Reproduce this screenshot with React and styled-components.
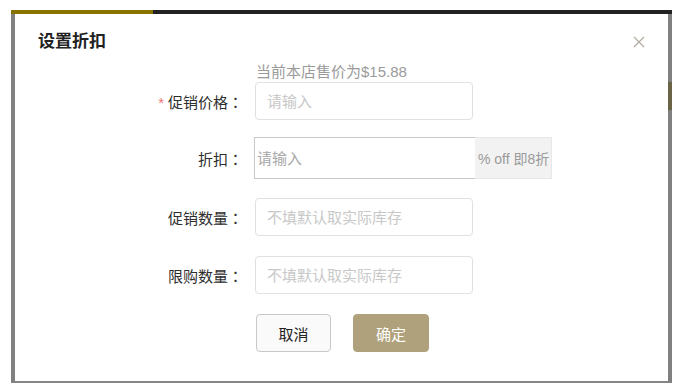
import React from "react";
import styled, { createGlobalStyle } from "styled-components";

const Global = createGlobalStyle`
  html, body { margin: 0; padding: 0; background: #fff; }
  body { font-family: "Liberation Sans", "Noto Sans CJK SC", sans-serif; }
  * { box-sizing: border-box; }
`;

const Page = styled.div`
  width: 693px;
  height: 390px;
  padding: 10px 21px 7px 11px;
  background: #fff;
`;

const Frame = styled.div`
  display: flex;
  flex-direction: column;
  height: 373px;
  border-left: 4px solid #808080;
  border-right: 4px solid #808080;
  border-bottom: 2px solid #858585;
  background: #fff;
  position: relative;
`;

const TopBar = styled.div`
  display: flex;
  height: 4px;
  margin: 0 -4px;
`;

const BarSegment = styled.div`
  height: 100%;
  flex: ${(p) => (p.$grow ? "1" : "0 0 142px")};
  background: ${(p) => p.$color};
`;

const SideMark = styled.div`
  position: absolute;
  right: -4px;
  top: 72px;
  width: 4px;
  height: 28px;
  background: #6b6348;
`;

const Modal = styled.div`
  flex: 1;
  display: flex;
  flex-direction: column;
`;

const Header = styled.div`
  display: flex;
  align-items: center;
  justify-content: space-between;
  padding: 16px 23px 0 23px;
  height: 40px;
`;

const Title = styled.h2`
  margin: 0;
  font-size: 17px;
  line-height: 24px;
  font-weight: 700;
  color: #222;
`;

const Close = styled.button`
  border: 0;
  background: none;
  padding: 0;
  width: 12px;
  height: 12px;
  display: flex;
  cursor: pointer;
`;

const Form = styled.div`
  display: grid;
  grid-template-columns: 228px 1fr;
  column-gap: 12px;
  margin-top: 8px;
  align-items: center;
`;

const Hint = styled.div`
  grid-column: 2;
  font-size: 15px;
  line-height: 20px;
  color: #9a9a9a;
  margin-left: 1px;
`;

const Label = styled.label`
  justify-self: end;
  font-size: 15px;
  color: #2e2e2e;
  margin-top: ${(p) => p.$top}px;
  white-space: nowrap;
`;

const Colon = styled.span`
  font-family: "Noto Sans CJK JP", sans-serif;
`;

const Star = styled.span`
  color: #f07575;
  margin-right: 4px;
`;

const Field = styled.div`
  display: flex;
  margin-top: ${(p) => p.$top}px;
`;

const TextInput = styled.input`
  width: 218px;
  height: 38px;
  border: 1px solid #e0e0e0;
  border-radius: 4px;
  padding: 0 11px;
  font-family: inherit;
  font-size: 15px;
  color: #333;
  outline: none;
  &::placeholder { color: #c8c8c8; }
`;

const SquareInput = styled.input`
  width: 221px;
  height: 42px;
  margin-left: -1px;
  border: 1px solid #c8c8c8;
  border-right: 0;
  border-radius: 0;
  padding: 0 2px;
  font-family: inherit;
  font-size: 15px;
  outline: none;
  &::placeholder { color: #a8a8a8; }
`;

const Addon = styled.span`
  display: flex;
  align-items: center;
  height: 42px;
  width: 77px;
  padding-left: 3px;
  background: #f2f2f2;
  border: 1px solid #e8e8e8;
  border-left: 0;
  font-size: 14px;
  color: #9a9a9a;
  white-space: nowrap;
`;

const Actions = styled.div`
  grid-column: 2;
  display: flex;
  gap: 22px;
  margin-top: 20px;
  padding-left: 1px;
`;

const Button = styled.button`
  width: ${(p) => (p.$primary ? 76 : 75)}px;
  height: 38px;
  border-radius: 4px;
  font-family: inherit;
  font-size: 15px;
  cursor: pointer;
  border: 1px solid ${(p) => (p.$primary ? "#afa17c" : "#c8c8c8")};
  background: ${(p) => (p.$primary ? "#afa17c" : "#fafafa")};
  color: ${(p) => (p.$primary ? "#fff" : "#222")};
`;

export default function App() {
  return (
    <>
      <Global />
      <Page>
        <Frame>
          <TopBar>
            <BarSegment $color="#877300" />
            <BarSegment $grow $color="#222" />
          </TopBar>
          <SideMark />
          <Modal>
            <Header>
              <Title>设置折扣</Title>
              <Close aria-label="关闭">
                <svg width="12" height="12" viewBox="0 0 12 12">
                  <path d="M1 1L11 11M11 1L1 11" stroke="#b0aaa0" strokeWidth="1.2" fill="none" />
                </svg>
              </Close>
            </Header>
            <Form>
              <Hint>当前本店售价为$15.88</Hint>
              <Label $top={0}><Star>*</Star>促销价格<Colon>：</Colon></Label>
              <Field $top={0}>
                <TextInput placeholder="请输入" />
              </Field>
              <Label $top={17}>折扣<Colon>：</Colon></Label>
              <Field $top={17}>
                <SquareInput placeholder="请输入" />
                <Addon>% off 即8折</Addon>
              </Field>
              <Label $top={19}>促销数量<Colon>：</Colon></Label>
              <Field $top={19}>
                <TextInput placeholder="不填默认取实际库存" />
              </Field>
              <Label $top={20}>限购数量<Colon>：</Colon></Label>
              <Field $top={20}>
                <TextInput placeholder="不填默认取实际库存" />
              </Field>
              <Actions>
                <Button>取消</Button>
                <Button $primary>确定</Button>
              </Actions>
            </Form>
          </Modal>
        </Frame>
      </Page>
    </>
  );
}
